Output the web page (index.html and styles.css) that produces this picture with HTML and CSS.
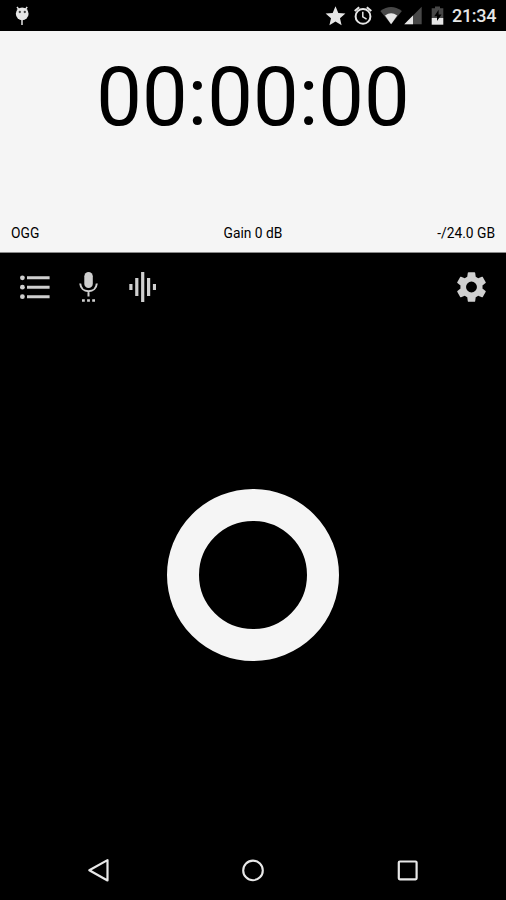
FILE: index.html
```html
<!DOCTYPE html>
<html lang="en">
<head>
<meta charset="utf-8">
<title>Recorder</title>
<link rel="stylesheet" href="styles.css">
</head>
<body>
<header class="status">
  <svg class="mascot" width="16" height="31" viewBox="14 0 16 31">
    <path d="M17 7l2 2.600M27.200 7l-2 2.600M22 19v6" stroke="#e4e4e4" stroke-width="1.500" fill="none"/>
    <circle cx="22.200" cy="13.800" r="6.400" fill="#e6e6e6"/>
    <circle cx="19.800" cy="12" r="1.150" fill="#444"/><circle cx="24.800" cy="12" r="1.150" fill="#444"/>
  </svg>
  <svg width="26" height="31" viewBox="324 0 26 31">
    <path fill="#e6e6e6" d="M335.500 6.300l2.800 6.600 7.100.6-5.400 4.700 1.600 7-6.100-3.700-6.100 3.700 1.600-7-5.400-4.700 7.100-.6z"/>
  </svg>
  <svg width="28" height="31" viewBox="350 0 28 31" fill="none" stroke="#e6e6e6">
    <circle cx="363" cy="16.400" r="7.400" stroke-width="2"/>
    <path d="M354.700 11.100l4.500-3.800M371.300 11.100l-4.500-3.800" stroke-width="2"/>
    <path d="M362.800 11.800v5l3.800 2.300" stroke-width="1.500"/>
  </svg>
  <svg width="46" height="31" viewBox="378 0 46 31">
    <path fill="#484848" d="M380.300 10.900Q391 3.100 401.900 10.900L391.100 24.300z"/>
    <path fill="#e6e6e6" d="M385 15.600Q391.100 11 397.200 15.600L391.100 24.300z"/>
    <path fill="#484848" d="M421.700 6.800v17.400h-17.400z"/>
    <path fill="#e6e6e6" d="M413 15.500v8.700h-8.700z"/>
  </svg>
  <svg width="28" height="31" viewBox="424 0 28 31">
    <path fill="#484848" d="M431.700 8.300h3.300V6.400h5v1.900h3.300V18h-11.600z"/>
    <path fill="#e6e6e6" d="M431.700 18h11.600v6.700h-11.600z"/>
    <path fill="#000" d="M438.600 9.800l-4.300 6.400h2.700v4.800l4.600-6.600h-3z"/>
  </svg>
  <span class="clock">21:34</span>
</header>
<section class="display">
  <div class="timer">00:00:00</div>
  <div class="info"><span>OGG</span><span class="gain">Gain 0 dB</span><span class="space">-/24.0 GB</span></div>
</section>
<main>
  <nav class="toolbar">
    <svg width="30" height="32" viewBox="20 271 30 32" fill="#cfcfcf">
      <circle cx="22.400" cy="277.800" r="2.400"/><circle cx="22.400" cy="287.200" r="2.400"/><circle cx="22.400" cy="296.700" r="2.400"/>
      <path d="M27 276.200h22.600v3H27zM27 285.700h22.600v3H27zM27 295.200h22.600v3H27z"/>
    </svg>
    <svg class="mic" width="20" height="32" viewBox="79 271 20 32" fill="#cfcfcf">
      <rect x="84.300" y="272" width="8.500" height="16" rx="4.250"/>
      <path d="M80.200 283.500c.4 4.700 3.600 7.700 8.300 7.700s7.900-3 8.300-7.700M88.500 291v5.400" fill="none" stroke="#cfcfcf" stroke-width="2"/>
      <path d="M82 299.200h2.800v2.600H82zM87.100 299.200h2.800v2.600h-2.800zM92.200 299.200h2.800v2.600h-2.800z"/>
    </svg>
    <svg class="wave" width="28" height="32" viewBox="129 271 28 32" fill="#cfcfcf">
      <path d="M129.300 284h3.200v6h-3.200zM135.200 278h3.200v18h-3.200zM141.100 272h3.200v30h-3.200zM147 278h3.200v18H147zM152.900 284h3.100v6h-3.100z"/>
    </svg>
    <svg class="gear" width="32" height="32" viewBox="1.500 1.150 21.700 21.700">
      <path fill="#cfcfcf" d="M19.430 12.980c.04-.32.070-.64.070-.98s-.03-.66-.07-.98l2.110-1.650c.19-.15.240-.42.120-.64l-2-3.460c-.12-.22-.39-.3-.61-.22l-2.490 1c-.52-.4-1.080-.73-1.690-.98l-.38-2.650C14.460 2.180 14.250 2 14 2h-4c-.25 0-.46.180-.49.420l-.38 2.650c-.61.250-1.170.590-1.690.980l-2.490-1c-.23-.09-.49 0-.61.220l-2 3.460c-.13.220-.07.490.120.640l2.110 1.650c-.04.320-.07.650-.07.980s.030.660.070.980l-2.110 1.650c-.19.150-.24.420-.12.640l2 3.460c.12.220.39.300.61.220l2.490-1c.52.400 1.080.730 1.690.980l.38 2.650c.03.240.24.420.49.420h4c.25 0 .46-.18.490-.42l.38-2.650c.61-.25 1.170-.59 1.690-.98l2.490 1c.23.090.49 0 .61-.22l2-3.460c.12-.22.070-.49-.12-.64zM12 15.700a3.700 3.700 0 1 1 0-7.400 3.700 3.700 0 0 1 0 7.400z"/>
    </svg>
  </nav>
  <div class="stage"><button class="record" aria-label="Record"></button></div>
</main>
<footer class="navbar">
  <svg width="26" height="26" viewBox="85 857 26 26"><path d="M89.300 870.300l18.200-10.200v20.400z" fill="none" stroke="#e8e8e8" stroke-width="2.200" stroke-linejoin="round"/></svg>
  <svg width="26" height="26" viewBox="240 857 26 26"><circle cx="253" cy="870.400" r="9.800" fill="none" stroke="#e8e8e8" stroke-width="2.100"/></svg>
  <svg width="26" height="26" viewBox="394 857 26 26"><rect x="398.800" y="861.500" width="17.800" height="17.800" rx="1" fill="none" stroke="#e8e8e8" stroke-width="2.200"/></svg>
</footer>
</body>
</html>
```
FILE: styles.css
```css
* { box-sizing: border-box; }
body {
  margin: 0;
  height: 900px;
  display: flex;
  flex-direction: column;
  background: #000;
  font-family: Roboto, sans-serif;
  overflow: hidden;
}
svg { display: block; flex: none; }
.status { height: 31px; display: flex; padding-left: 14px; color: #e6e6e6; }
.mascot { margin-right: 294px; }
.clock { font-size: 18px; font-weight: 500; line-height: 32px; letter-spacing: -0.3px; }
.display {
  height: 222px;
  background: #f5f5f5;
  border-bottom: 1px solid #8a8a8a;
  color: #000;
  display: flex;
  flex-direction: column;
  justify-content: space-between;
}
.timer { font-size: 81.300px; line-height: 96px; padding-top: 19px; text-align: center; white-space: nowrap; }
.info {
  display: grid;
  grid-template-columns: 1fr auto 1fr;
  padding: 0 11px 10px;
  font-size: 13.800px;
  line-height: 18px;
}
.space { text-align: right; }
main { flex: 1; display: flex; flex-direction: column; }
.toolbar { height: 68px; display: flex; align-items: center; padding: 0 18.500px 0 20px; }
.mic { margin-left: 29px; }
.wave { margin-left: 30px; }
.gear { margin-left: auto; }
.stage { flex: 1; display: flex; justify-content: center; align-items: center; }
.record {
  width: 172px;
  height: 172px;
  padding: 0;
  border: 32px solid #f5f5f5;
  border-radius: 50%;
  background: #000;
}
.navbar { height: 72px; display: flex; justify-content: space-between; padding: 29px 86px 0 85px; }
```
